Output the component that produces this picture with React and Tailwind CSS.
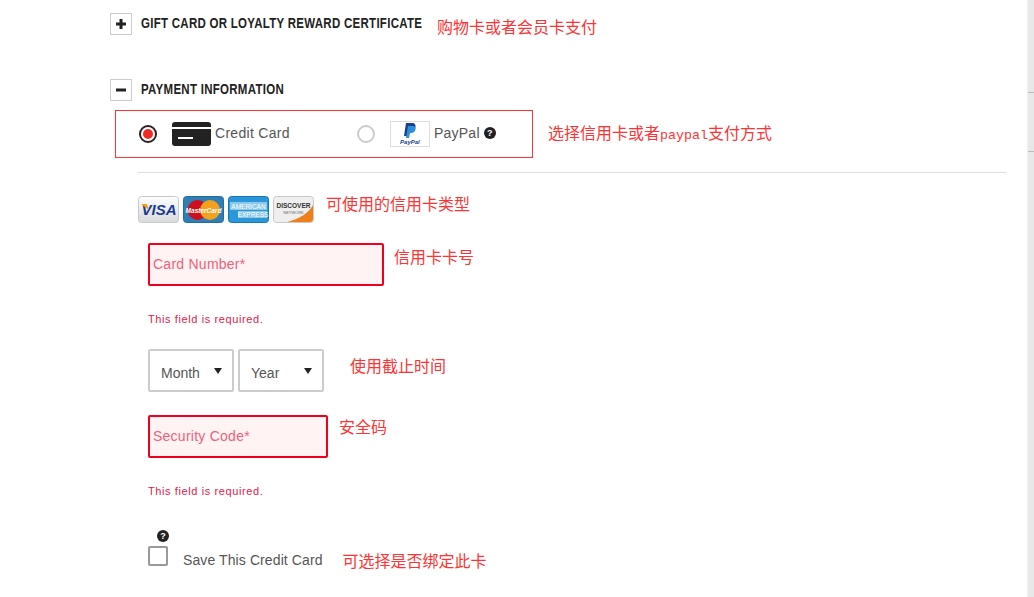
import React from 'react';

const cjk = "font-['Noto_Sans_CJK_SC',sans-serif] text-[16px] leading-[20px] text-[#f33] whitespace-nowrap";
const head = "font-['Liberation_Sans',sans-serif] font-bold text-[14px] leading-[20px] tracking-[0.35px] text-[#222] whitespace-nowrap block origin-left scale-x-[0.82]";
const body = "font-['Liberation_Sans',sans-serif] text-[14px] leading-[20px] text-[#555] whitespace-nowrap";

const Toggle = ({ minus }) => (
  <div className="w-[22px] h-[22px] border border-[#ccc] flex items-center justify-center shrink-0">
    <svg width="12" height="12" viewBox="0 0 12 12">
      <rect x="1" y="4.500" width="10" height="3" fill="#222" />
      {!minus && <rect x="4.500" y="1" width="3" height="10" fill="#222" />}
    </svg>
  </div>
);

const Help = () => (
  <span className="w-3 h-3 rounded-full bg-[#222] text-white text-[9px] leading-[12px] font-bold text-center font-['Liberation_Sans',sans-serif] inline-block shrink-0">?</span>
);

const CardIcon = () => (
  <svg width="39" height="24" viewBox="0 0 39 24">
    <rect x="0" y="0" width="39" height="24" rx="3" fill="#222" />
    <rect x="0" y="5" width="39" height="2" fill="#fff" />
    <rect x="6" y="15" width="15" height="2" fill="#fff" />
  </svg>
);

const PayPalLogo = () => (
  <div className="w-10 h-[26px] border border-[#ddd] flex flex-col items-center justify-end shrink-0">
    <svg width="13" height="15" viewBox="0 0 13 15">
      <path d="M3 0h6c3 0 4 2 3.400 4.400C11.800 7 10 8 7.500 8H6l-1 5H1z" fill="#1b3f8f" />
      <path d="M5 3h5c2 0 3 1.500 2.500 3.500C12 9 10 10 8 10H7l-1 5H3z" fill="#2b8fd8" />
    </svg>
    <span className="text-[6px] leading-[8px] font-bold italic text-[#1b3f8f] font-['Liberation_Sans',sans-serif]">PayPal</span>
  </div>
);

const Visa = () => (
  <svg width="41" height="27" viewBox="0 0 41 27">
    <defs>
      <linearGradient id="vg" x1="0" y1="0" x2="0" y2="1">
        <stop offset="0" stopColor="#fdfdfd" />
        <stop offset="1" stopColor="#d9dadc" />
      </linearGradient>
    </defs>
    <rect x="0.500" y="0.500" width="40" height="26" rx="3" fill="url(#vg)" stroke="#c9c9c9" />
    <text x="21" y="19" textAnchor="middle" fontFamily="Liberation Sans" fontWeight="700" fontStyle="italic" fontSize="15" fill="#1a3a8f">VISA</text>
    <path d="M3 8h6l2 6z" fill="#f0a21e" />
  </svg>
);

const Master = () => (
  <svg width="41" height="27" viewBox="0 0 41 27">
    <rect x="0.500" y="0.500" width="40" height="26" rx="3" fill="#2f7fb5" stroke="#1e6ea6" />
    <circle cx="14.500" cy="14" r="10" fill="#cc1020" />
    <circle cx="27" cy="14" r="10" fill="#f4a21e" />
    <text x="20.500" y="16.500" textAnchor="middle" fontFamily="Liberation Sans" fontWeight="700" fontStyle="italic" fontSize="6.500" fill="#fff">MasterCard</text>
  </svg>
);

const Amex = () => (
  <svg width="41" height="27" viewBox="0 0 41 27">
    <rect x="0.500" y="0.500" width="40" height="26" rx="3" fill="#2c97d8" stroke="#1577b8" />
    <rect x="2" y="6" width="37" height="8" fill="#8cc8ea" />
    <rect x="10" y="15" width="29" height="7" fill="#8cc8ea" />
    <text x="20.500" y="12.500" textAnchor="middle" fontFamily="Liberation Sans" fontSize="6.500" fill="#fff">AMERICAN</text>
    <text x="25" y="21" textAnchor="middle" fontFamily="Liberation Sans" fontSize="6.500" fill="#fff">EXPRESS</text>
  </svg>
);

const Discover = () => (
  <svg width="41" height="27" viewBox="0 0 41 27">
    <rect x="0.500" y="0.500" width="40" height="26" rx="3" fill="#efefef" stroke="#c9c9c9" />
    <path d="M14 26 C26 23 36 17 40 9 V23 a3 3 0 0 1 -3 3z" fill="#ef7f1a" />
    <text x="20.500" y="12" textAnchor="middle" fontFamily="Liberation Sans" fontWeight="700" fontSize="6.500" fill="#333">DISCOVER</text>
    <text x="20.500" y="18" textAnchor="middle" fontFamily="Liberation Sans" fontSize="4" fill="#666">NETWORK</text>
  </svg>
);

const FieldError = ({ width, label }) => (
  <div className={`${width} h-[43px] border-2 border-[#f0001e] rounded-[2px] bg-[#fff3f3] flex items-center pl-[3px] pb-[1px] text-[14px] tracking-[0.25px] text-[#f0607a] font-['Liberation_Sans',sans-serif] shrink-0`}>
    {label}
  </div>
);

const Select = ({ label, width }) => (
  <div className={`${width} h-[43px] border-2 border-[#ccc] rounded-[2px] flex items-center justify-between pl-[11px] pr-[10px] pt-[5px] shrink-0`}>
    <span className={body}>{label}</span>
    <svg width="8" height="6" viewBox="0 0 8 6" className="mb-[5px]"><path d="M0 0h8L4 6z" fill="#222" /></svg>
  </div>
);

const Required = () => (
  <div className="font-['Liberation_Sans',sans-serif] text-[11px] leading-[14px] tracking-[0.6px] text-[#e0204a]">This field is required.</div>
);

export default function App() {
  return (
    <div className="w-[1034px] h-[597px] overflow-hidden bg-white flex">
      <div className="flex-1 pl-[110px] pt-[13px]">
        {/* gift card */}
        <div className="flex items-center h-[22px]">
          <Toggle />
          <div className="w-[279px] ml-[9px] shrink-0 -mt-[2px]"><span className={head}>GIFT CARD OR LOYALTY REWARD CERTIFICATE</span></div>
          <span className={`${cjk} ml-[17px] mt-[3px]`}>购物卡或者会员卡支付</span>
        </div>

        {/* payment */}
        <div className="flex items-center h-[22px] mt-[44px]">
          <Toggle minus />
          <div className="ml-[9px] -mt-[2px]"><span className={head}>PAYMENT INFORMATION</span></div>
        </div>

        <div className="flex items-center mt-[9px] ml-[5px]">
          <div className="w-[418px] h-[48px] border border-[#f33] flex items-center pl-[23px]">
            <span className="w-[18px] h-[18px] rounded-full border-2 border-[#222] bg-[#ee2a24] shrink-0 outline-2 outline-white -outline-offset-4" />
            <div className="ml-[15px] shrink-0"><CardIcon /></div>
            <span className={`${body} ml-[4px] tracking-[0.3px] -mt-[2px]`}>Credit Card</span>
            <span className="ml-[67px] w-[18px] h-[18px] rounded-full border-2 border-[#ccc] shrink-0" />
            <div className="ml-[15px]"><PayPalLogo /></div>
            <span className={`${body} ml-[4px] tracking-[0.25px] -mt-[2px]`}>PayPal</span>
            <div className="ml-[4px] flex -mt-[2px]"><Help /></div>
          </div>
          <span className={`${cjk} ml-[15px]`}>选择信用卡或者<span className="font-['Liberation_Mono',monospace] text-[13.33px]">paypal</span>支付方式</span>
        </div>

        <div className="h-px bg-[#ddd] mt-[14px] ml-[28px] w-[868px]" />

        <div className="flex items-center mt-[23px] ml-[28px]">
          <div className="flex gap-1 shrink-0">
            <Visa />
            <Master />
            <Amex />
            <Discover />
          </div>
          <span className={`${cjk} ml-[12px] -mt-[14px]`}>可使用的信用卡类型</span>
        </div>

        <div className="ml-[38px]">
          <div className="flex mt-[20px]">
            <FieldError width="w-[236px]" label="Card Number*" />
            <span className={`${cjk} ml-[10px] mt-[3px]`}>信用卡卡号</span>
          </div>
          <div className="mt-[26px]"><Required /></div>

          <div className="flex mt-[23px]">
            <Select label="Month" width="w-[86px]" />
            <div className="ml-[4px]"><Select label="Year" width="w-[86px]" /></div>
            <span className={`${cjk} ml-[26px] mt-[6px]`}>使用截止时间</span>
          </div>

          <div className="flex mt-[23px]">
            <FieldError width="w-[180px]" label="Security Code*" />
            <span className={`${cjk} ml-[11px] mt-[1px]`}>安全码</span>
          </div>
          <div className="mt-[26px]"><Required /></div>

          <div className="ml-[9px] mt-[32px] flex"><Help /></div>
          <div className="flex items-start mt-[4px]">
            <span className="w-5 h-5 border-2 border-[#999] rounded-[2px] shrink-0" />
            <span className={`${body} ml-[15px] mt-[4px] tracking-[0.1px] text-[13px]`}>Save This Credit Card</span>
            <span className={`${cjk} ml-[20px] mt-[4px]`}>可选择是否绑定此卡</span>
          </div>
        </div>
      </div>

      {/* scrollbar */}
      <div className="w-[7px] h-full bg-[#e8e8e8] border-l border-[#f0f0f0] shrink-0 flex flex-col">
        <div className="h-[93px] border-b border-[#bbb]" />
        <div className="h-[59px] border-b border-[#bbb]" />
      </div>
    </div>
  );
}
